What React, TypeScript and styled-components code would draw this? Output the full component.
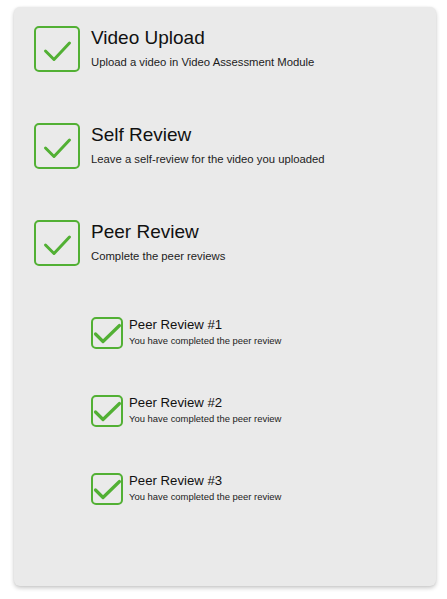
import React, { FC } from "react";
import styled, { createGlobalStyle } from "styled-components";

const GlobalStyle = createGlobalStyle`
  html, body {
    margin: 0;
    padding: 0;
    background: #ffffff;
  }
  body {
    font-family: "Liberation Sans", Arial, Helvetica, sans-serif;
  }
`;

const Page = styled.div`
  padding: 7px 11px 13px 14px;
`;

const Card = styled.div`
  box-sizing: border-box;
  width: 422px;
  height: 579px;
  padding: 19px 20px;
  background: #eaeaea;
  border-radius: 6px;
  box-shadow: 0 2px 4px rgba(0, 0, 0, 0.22), 0 0 2px rgba(0, 0, 0, 0.06);
  display: flex;
  flex-direction: column;
  gap: 51px;
`;

const SubList = styled.div`
  display: flex;
  flex-direction: column;
  gap: 46px;
  padding-left: 57px;
`;

const Step = styled.div<{ $small?: boolean }>`
  display: flex;
  align-items: flex-start;
  gap: ${({ $small }) => ($small ? "6px" : "11px")};
`;

const Text = styled.div`
  display: flex;
  flex-direction: column;
  color: #111111;
`;

const Title = styled.div<{ $small?: boolean }>`
  font-size: ${({ $small }) => ($small ? "13.2px" : "19px")};
  line-height: normal;
  margin-top: ${({ $small }) => ($small ? "0" : "0.5px")};
  margin-bottom: ${({ $small }) => ($small ? "3px" : "7.5px")};
`;

const Subtitle = styled.div<{ $small?: boolean }>`
  font-size: ${({ $small }) => ($small ? "9.45px" : "11.3px")};
  line-height: normal;
  color: #1c1c1c;
`;

const Box = styled.svg`
  flex-shrink: 0;
  display: block;
`;

const GREEN = "#52b034";

const CheckBox: FC<{ small?: boolean }> = ({ small }) =>
  small ? (
    <Box width="32" height="32" viewBox="0 0 32 32">
      <rect x="1" y="1" width="30" height="30" rx="4" fill="none" stroke={GREEN} strokeWidth="2" />
      <polyline points="4.5,17 12,24.5 28.5,8.5" fill="none" stroke={GREEN} strokeWidth="3.2" strokeLinecap="round" strokeLinejoin="round" />
    </Box>
  ) : (
    <Box width="46" height="46" viewBox="0 0 46 46">
      <rect x="1" y="1" width="44" height="44" rx="4" fill="none" stroke={GREEN} strokeWidth="2" />
      <polyline points="11.5,25 20,33.5 35.5,17" fill="none" stroke={GREEN} strokeWidth="3" strokeLinecap="round" strokeLinejoin="round" />
    </Box>
  );

const steps = [
  { title: "Video Upload", desc: "Upload a video in Video Assessment Module" },
  { title: "Self Review", desc: "Leave a self-review for the video you uploaded" },
  { title: "Peer Review", desc: "Complete the peer reviews" },
];

const reviews = [1, 2, 3];

const App: FC = () => {
  return (
    <Page>
      <GlobalStyle />
      <Card>
        {steps.map((s) => (
          <Step key={s.title}>
            <CheckBox />
            <Text>
              <Title>{s.title}</Title>
              <Subtitle>{s.desc}</Subtitle>
            </Text>
          </Step>
        ))}
        <SubList>
          {reviews.map((n) => (
            <Step $small key={n}>
              <CheckBox small />
              <Text>
                <Title $small>Peer Review #{n}</Title>
                <Subtitle $small>You have completed the peer review</Subtitle>
              </Text>
            </Step>
          ))}
        </SubList>
      </Card>
    </Page>
  );
};

export default App;
